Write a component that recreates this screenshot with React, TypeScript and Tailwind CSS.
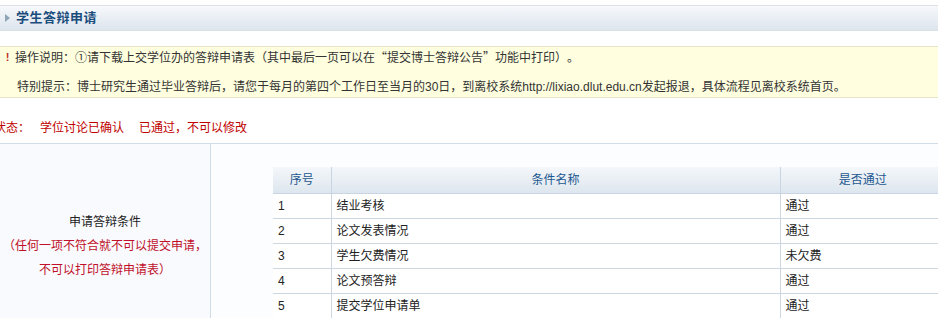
import React from 'react';

const rows = [
  { no: '1', name: '结业考核', pass: '通过' },
  { no: '2', name: '论文发表情况', pass: '通过' },
  { no: '3', name: '学生欠费情况', pass: '未欠费' },
  { no: '4', name: '论文预答辩', pass: '通过' },
  { no: '5', name: '提交学位申请单', pass: '通过' },
];

const App = () => {
  return (
    <div
      className="w-[938px] h-[318px] overflow-hidden bg-white text-[12px] text-[#333] [text-spacing-trim:space-all]"
      style={{ fontFamily: '"Liberation Sans", "Noto Sans CJK SC", sans-serif' }}
    >
      {/* Title bar */}
      <div className="mt-[5px] h-[26px] border-t border-b border-[#dcdfe3] bg-gradient-to-b from-[#f6f8fb] to-[#dde5ee] flex items-center">
        <svg width="5" height="8" viewBox="0 0 5 8" className="ml-[5px] mr-[6px]">
          <polygon points="0,0 5,4 0,8" fill="#8fa3b6" />
        </svg>
        <span className="font-bold text-[13px] text-[#1b4d7c] tracking-[0.5px]">学生答辩申请</span>
      </div>

      {/* Notice */}
      <div className="mt-[15px] h-[52px] border-t border-b border-[#e6e3c6] bg-[#ffffdf] flex flex-col justify-center gap-[14px] leading-[16px]">
        <div className="flex items-center">
          <span className="w-[15px] text-center text-[#c0302c] font-bold text-[11px]">!</span>
          <span className="font-['Noto_Sans_CJK_SC',sans-serif]">
            操作说明：<span className="inline-block w-[12px] text-center">①</span>请下载上交学位办的答辩申请表（其中最后一页可以在
            <span className="inline-block w-[12px] text-right">“</span>提交博士答辩公告
            <span className="inline-block w-[12px] text-left">”</span>功能中打印）。
          </span>
        </div>
        <div className="pl-[17px]">
          特别提示：博士研究生通过毕业答辩后，请您于每月的第四个工作日至当月的30日，到离校系统http://lixiao.dlut.edu.cn发起报退，具体流程见离校系统首页。
        </div>
      </div>

      {/* Status */}
      <div className="mt-[22px] h-[16px] leading-[16px] flex text-[#c00000] -ml-[6px]">
        <span className="w-[46px]">状态：</span>
        <span>学位讨论已确认</span>
        <span className="ml-[15px]">已通过，不可以修改</span>
      </div>

      {/* Conditions box */}
      <div className="mt-[7px] border-t border-[#d2dce7] flex h-[200px]">
        <div className="w-[211px] shrink-0 border-r border-[#d2dce7] bg-[#f8fafd] flex flex-col items-center pt-[66px] leading-[24px]">
          <span className="text-[#222]">申请答辩条件</span>
          <span className="text-[#c0102a]">（任何一项不符合就不可以提交申请，</span>
          <span className="text-[#c0102a]">不可以打印答辩申请表）</span>
        </div>
        <div className="flex-1 bg-[#fcfdfe] pt-[23px] pl-[62px]">
          <table className="w-[672px] border-collapse">
            <thead>
              <tr className="h-[26px] bg-gradient-to-b from-[#f4f7fa] to-[#dde6ee] text-[#1d5890]">
                <th className="w-[58px] font-normal border-b border-[#c9d5e2]">序号</th>
                <th className="w-[449px] font-normal border-l border-b border-[#c9d5e2]">条件名称</th>
                <th className="font-normal border-l border-b border-[#c9d5e2]">是否通过</th>
              </tr>
            </thead>
            <tbody className="bg-white text-[#222]">
              {rows.map((r, i) => (
                <tr
                  key={r.no}
                  className={`h-[25px] border-b ${i === rows.length - 1 ? 'border-[#9ea3a8]' : 'border-[#cdd7e2]'}`}
                >
                  <td className="pl-[5px]">{r.no}</td>
                  <td className="pl-[5px] border-l border-[#cdd7e2]">{r.name}</td>
                  <td className="pl-[5px] border-l border-[#cdd7e2]">{r.pass}</td>
                </tr>
              ))}
            </tbody>
          </table>
        </div>
      </div>
    </div>
  );
};

export default App;
